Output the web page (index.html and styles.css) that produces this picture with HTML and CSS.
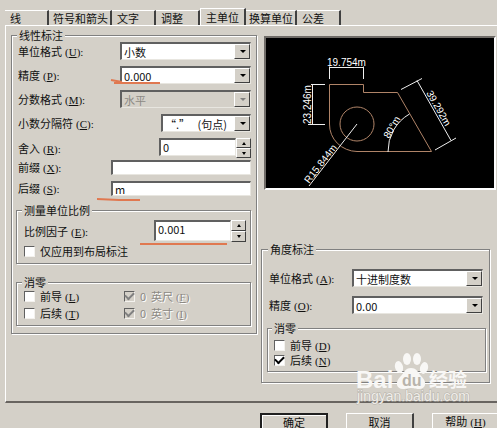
FILE: index.html
```html
<!DOCTYPE html>
<html lang="zh-CN">
<head>
<meta charset="utf-8">
<title>主单位</title>
<link rel="stylesheet" href="styles.css">
</head>
<body>
<main class="dialog">
  <nav class="tabs" role="tablist">
    <button class="tab" role="tab">线</button>
    <button class="tab tab-wide" role="tab">符号和箭头</button>
    <button class="tab" role="tab">文字</button>
    <button class="tab" role="tab">调整</button>
    <button class="tab tab-active" role="tab" aria-selected="true">主单位</button>
    <button class="tab tab-mid" role="tab">换算单位</button>
    <button class="tab" role="tab">公差</button>
  </nav>

  <div class="page">
    <fieldset class="group linear">
      <legend>线性标注</legend>
      <div class="rows">
        <div class="row">
          <label for="unit">单位格式<span class="key">(<u>U</u>):</span></label>
          <span class="combo"><select id="unit"><option>小数</option></select></span>
        </div>
        <div class="row">
          <label for="precision">精度<span class="key">(<u>P</u>):</span></label>
          <span class="combo"><select id="precision"><option>0.000</option></select>
            <svg class="mark mark-precision" viewBox="0 0 50 6" aria-hidden="true"><path d="M0 1 L11 3 M3 4 L49 4"/></svg>
          </span>
        </div>
        <div class="row">
          <label for="fraction">分数格式<span class="key">(<u>M</u>):</span></label>
          <span class="combo combo-off"><select id="fraction" disabled><option>水平</option></select></span>
        </div>
        <div class="row">
          <label for="separator">小数分隔符<span class="key">(<u>C</u>):</span></label>
          <span class="combo combo-short"><select id="separator"><option>“.”&nbsp;&nbsp;&nbsp;(句点)</option></select></span>
        </div>
        <div class="row">
          <label for="round">舍入<span class="key">(<u>R</u>):</span></label>
          <span class="spin"><input id="round" type="text" value="0"><span class="steps"><button class="step up" aria-label="增加"></button><button class="step down" aria-label="减少"></button></span></span>
        </div>
      </div>
      <div class="rows rows-text">
        <div class="row">
          <label for="prefix">前缀<span class="key">(<u>X</u>):</span></label>
          <span class="text"><input id="prefix" type="text" value=""></span>
        </div>
        <div class="row">
          <label for="suffix">后缀<span class="key">(<u>S</u>):</span></label>
          <span class="text"><input id="suffix" type="text" value="m">
            <svg class="mark mark-suffix" viewBox="0 0 44 4" aria-hidden="true"><path d="M0 1 L22 2 L43 2"/></svg>
          </span>
        </div>
      </div>

      <fieldset class="group inner scale">
        <legend>测量单位比例</legend>
        <div class="row">
          <label for="factor">比例因子<span class="key">(<u>E</u>):</span></label>
          <span class="spin spin-inner"><input id="factor" type="text" value="0.001"><span class="steps"><button class="step up" aria-label="增加"></button><button class="step down" aria-label="减少"></button></span>
            <svg class="mark mark-factor" viewBox="0 0 88 4" aria-hidden="true"><path d="M0 2 L87 2"/></svg>
          </span>
        </div>
        <label class="check"><input type="checkbox">仅应用到布局标注</label>
      </fieldset>

      <fieldset class="group inner zeros">
        <legend>消零</legend>
        <div class="pairs">
          <label class="check"><input type="checkbox"><span>前导<span class="key">(<u>L</u>)</span></span></label>
          <label class="check check-off"><input type="checkbox" checked disabled><span>0&nbsp; 英尺<span class="key">(<u>F</u>)</span></span></label>
          <label class="check"><input type="checkbox"><span>后续<span class="key">(<u>T</u>)</span></span></label>
          <label class="check check-off"><input type="checkbox" checked disabled><span>0&nbsp; 英寸<span class="key">(<u>I</u>)</span></span></label>
        </div>
      </fieldset>
    </fieldset>

    <div class="side">
      <div class="preview">
        <svg viewBox="266 38 228 150" role="img" aria-label="标注预览">
          <g class="part">
            <path d="M329.500 84.500H363.500V92.500H397.500L431.500 151.500H357A28 27 0 0 1 329.500 124Z"/>
            <circle cx="357" cy="124" r="17"/>
          </g>
          <g class="dims">
            <path d="M329.500 79V66.500M363.500 79V66.500M329 67.500H364"/>
            <path d="M325 84.500H311M325 124.500H308M312.500 84V125"/>
            <path d="M401 89.500L422 78.500M435 150L456 138M417 80.500L451 140.500"/>
            <path d="M388 152A43 43 0 0 1 409.500 114"/>
            <path d="M357 124L309 186"/>
          </g>
          <g class="nums">
            <text x="327" y="66">19.754m</text>
            <text transform="translate(311 124) rotate(-90)">23.246m</text>
            <text transform="translate(426 93) rotate(60)">39.292m</text>
            <text transform="translate(389 139) rotate(-60)">80°m</text>
            <text transform="translate(309 184) rotate(-52)">R15.844m</text>
          </g>
        </svg>
      </div>

      <fieldset class="group angle">
        <legend>角度标注</legend>
        <div class="rows rows-angle">
          <div class="row">
            <label for="angle-unit">单位格式<span class="key">(<u>A</u>):</span></label>
            <span class="combo"><select id="angle-unit"><option>十进制度数</option></select></span>
          </div>
          <div class="row">
            <label for="angle-precision">精度<span class="key">(<u>O</u>):</span></label>
            <span class="combo"><select id="angle-precision"><option>0.00</option></select></span>
          </div>
        </div>
        <fieldset class="group inner angle-zeros">
          <legend>消零</legend>
          <label class="check"><input type="checkbox"><span>前导<span class="key">(<u>D</u>)</span></span></label>
          <label class="check"><input type="checkbox" checked><span>后续<span class="key">(<u>N</u>)</span></span></label>
        </fieldset>
      </fieldset>
    </div>
  </div>

  <footer class="actions">
    <button class="action action-main">确定</button>
    <button class="action">取消</button>
    <button class="action">帮助<span class="key">(<u>H</u>)</span></button>
  </footer>

  <svg class="watermark" viewBox="0 0 120 54" aria-hidden="true">
    <text class="wm-name" x="3" y="37">Bai</text>
    <g class="paw">
      <ellipse cx="46" cy="16" rx="4" ry="6" transform="rotate(-15 46 16)"/>
      <ellipse cx="54" cy="8" rx="4" ry="6"/>
      <ellipse cx="64" cy="8" rx="4" ry="6"/>
      <ellipse cx="71" cy="17" rx="4" ry="6" transform="rotate(15 71 17)"/>
      <path d="M58 17C64 17 65 22 69 26C74 31 73 38 66 38C62 38 61 37 58 37C55 37 54 38 50 38C43 38 42 31 47 26C51 22 52 17 58 17Z"/>
    </g>
    <text class="wm-du" x="49" y="35">du</text>
    <text class="wm-cn" x="76" y="36">经验</text>
    <text class="wm-url" x="4" y="50">jingyan.baidu.com</text>
  </svg>
</main>
</body>
</html>
```
FILE: styles.css
```css
:root {
  --face: #d4d0c8;
  --dark: #808080;
  --deep: #404040;
  --text: #101010;
  --mark: #e07850;
}

* { box-sizing: border-box; }

body {
  margin: 0;
  background: #fff;
  color: var(--text);
  font: 11px/14px "Noto Sans CJK SC", sans-serif;
  overflow: hidden;
}

button, input, select { font: inherit; color: inherit; }

.dialog {
  position: relative;
  min-height: 100vh;
  margin-right: 3px;
  padding: 8px 0 0 5px;
  background: var(--face);
  overflow: hidden;
}

.key { margin-left: 3px; font-family: "Liberation Serif", serif; }

/* Tabs */
.tabs {
  display: flex;
  align-items: flex-end;
  height: 17px;
}

.tab {
  flex: 0 0 44px;
  height: 15px;
  padding: 0 0 0 5px;
  border: 0;
  border-top: 1px solid #fff;
  border-right: 2px solid var(--deep);
  background: var(--face);
  line-height: 14px;
  text-align: left;
  white-space: nowrap;
}

.tab-wide { flex-basis: 63px; padding-left: 4px; }
.tab-mid { flex-basis: 51px; padding-left: 3px; }

.tab-active {
  flex-basis: 46px;
  height: 17px;
  border-left: 1px solid #fff;
}

.page {
  display: grid;
  grid-template-columns: 246fr 236fr;
  gap: 4px;
  padding: 2px 0 18px 5px;
  border-top: 1px solid #fff;
  border-left: 1px solid #fff;
  border-bottom: 2px solid #686460;
}

/* Group boxes */
.group {
  min-width: 0;
  margin: 0;
  padding: 0 5px 7px;
  border: 1px solid var(--dark);
  box-shadow: 1px 1px 0 #fff, inset 1px 1px 0 #fff;
}

.group > legend {
  margin-left: 1px;
  padding: 0 2px 0 0;
  background: var(--face);
  line-height: 14px;
}

.linear { align-self: start; padding-left: 4px; }
.linear > legend, .angle > legend { padding-left: 2px; }
.inner { padding: 3px 4px 5px 7px; }
.inner > legend { margin-left: -2px; padding-left: 2px; }

.rows {
  display: grid;
  gap: 6px;
  padding-left: 2px;
}

.rows-text { margin-top: 2px; }

.row {
  display: flex;
  align-items: center;
  justify-content: space-between;
}

.row label { white-space: nowrap; }

/* Fields */
.combo, .spin, .text { position: relative; display: flex; }
.combo { flex: 0 0 131px; height: 18px; }
.combo-short { flex-basis: 90px; }
.text { flex: 0 0 140px; height: 15px; }
.spin { flex: 0 0 92px; height: 20px; }
.spin-inner { height: 22px; }

select, input[type="text"] {
  width: 100%;
  min-width: 0;
  margin: 0;
  padding: 0 0 0 2px;
  appearance: none;
  border: 1px solid #e8e6e0;
  border-top: 2px solid #606060;
  border-left: 2px solid #606060;
  border-radius: 0;
  background: #fff;
  opacity: 1;
}

.spin input { height: 18px; padding-bottom: 2px; }
.spin-inner input { height: 21px; padding-bottom: 4px; }

.combo::after {
  content: "";
  position: absolute;
  top: 2px;
  right: 1px;
  bottom: 1px;
  width: 14px;
  border: 1px solid #fff;
  border-right-color: var(--deep);
  border-bottom-color: var(--deep);
  background: linear-gradient(var(--face), var(--face));
  pointer-events: none;
}

.combo::before {
  content: "";
  position: absolute;
  z-index: 1;
  top: 8px;
  right: 5px;
  border: 3px solid transparent;
  border-top-color: #000;
  border-bottom: 0;
  pointer-events: none;
}

.combo-off select { background: var(--face); color: #8c8984; }
.combo-off::before { border-top-color: var(--dark); }

.steps { display: flex; flex: 0 0 15px; flex-direction: column; }

.step {
  display: flex;
  flex: 1;
  align-items: center;
  justify-content: center;
  padding: 0;
  border: 1px solid #fff;
  border-right-color: var(--deep);
  border-bottom-color: var(--deep);
  background: var(--face);
}

.step::before {
  content: "";
  border: 2px solid transparent;
}

.up::before { border-top: 0; border-bottom: 3px solid #000; }
.down::before { border-bottom: 0; border-top: 3px solid #000; }

/* Hand-drawn underlines */
.mark {
  position: absolute;
  overflow: visible;
  fill: none;
  stroke: var(--mark);
  stroke-width: 2;
  pointer-events: none;
}

.mark-precision { left: -9px; bottom: -1px; width: 50px; height: 6px; }
.mark-suffix { left: -14px; bottom: -6px; width: 44px; height: 4px; }
.mark-factor { left: -14px; bottom: -4px; width: 88px; height: 4px; }

/* Check boxes */
.check {
  display: flex;
  align-items: center;
  gap: 5px;
  height: 14px;
  white-space: nowrap;
}

.check input {
  display: grid;
  place-content: center;
  width: 11px;
  height: 11px;
  margin: 0;
  appearance: none;
  border: 1px solid #f4f2ee;
  border-top-color: #606060;
  border-left-color: #606060;
  background: #fff;
}

.check input:checked::before {
  content: "";
  width: 7px;
  height: 4px;
  border-left: 2px solid #000;
  border-bottom: 2px solid #000;
  rotate: -45deg;
  translate: 0 -1px;
}

.check-off { color: #8c8984; text-shadow: 1px 1px 0 #fff; }
.check-off input { background: var(--face); }
.check-off input:checked::before { border-color: var(--dark); }

.scale { margin-top: 7px; }
.scale .check { margin-top: 2px; }
.zeros { margin-top: 11px; padding-top: 0; }

.pairs {
  display: grid;
  grid-template-columns: 99fr 121fr;
  row-gap: 3px;
}

/* Right column */
.side { display: flex; flex-direction: column; }

.preview {
  margin: 8px 1px 0 3px;
  border: 2px solid #fff;
  border-top-color: #706c68;
  border-left-color: #706c68;
  background: #000;
}

.preview svg { display: block; width: 100%; }

.part { fill: none; stroke: #b08468; }
.dims { fill: none; stroke: #f0f0f0; }
.nums { fill: #fff; font: 10px "Liberation Sans", sans-serif; }

.angle { margin: 52px 7px 0 0; padding: 13px 3px 10px 5px; }
.rows-angle { gap: 9px; padding: 0 3px 0 2px; }
.angle-zeros { margin-top: 7px; padding-left: 6px; padding-bottom: 4px; }
.angle-zeros .check + .check { margin-top: 1px; }

/* Footer */
.actions {
  display: flex;
  justify-content: flex-end;
  gap: 18px;
  margin-right: -3px;
  padding-top: 10px;
}

.action {
  flex: 0 0 68px;
  height: 18px;
  padding: 0;
  border: 1px solid #fff;
  border-right: 2px solid var(--deep);
  border-bottom: 2px solid var(--deep);
  background: var(--face);
  line-height: 14px;
}

.action-main {
  border: 2px solid #202020;
  box-shadow: inset 1px 1px 0 #fff;
}

/* Watermark */
.watermark {
  position: absolute;
  top: 351px;
  right: 24px;
  width: 120px;
  height: 54px;
  fill: #f8f7f5;
  pointer-events: none;
}

.wm-name { font: bold 24px "Liberation Sans", sans-serif; }
.wm-du { font: bold 16px "Liberation Sans", sans-serif; fill: #b8b4ac; }
.wm-cn { font: bold 19px "Noto Sans CJK SC", sans-serif; }
.wm-url { font: 14px "Liberation Sans", sans-serif; fill: #f0eeea; stroke: #b4b0a8; stroke-width: 1; paint-order: stroke; }
```
